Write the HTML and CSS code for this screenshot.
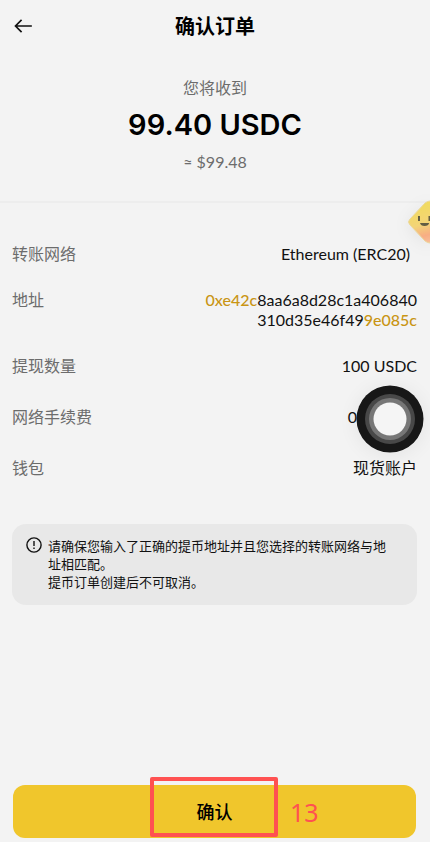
FILE: index.html
```html
<!DOCTYPE html>
<html lang="zh-CN">
<head>
<meta charset="utf-8">
<meta name="viewport" content="width=device-width, initial-scale=1">
<title>确认订单</title>
<link rel="stylesheet" href="styles.css">
</head>
<body>
<div class="page">
  <header class="topbar">
    <button class="back" type="button" aria-label="返回">
      <svg width="18" height="14" viewBox="0 0 18 14" fill="none" stroke="#111" stroke-width="1.7" stroke-linecap="square" stroke-linejoin="miter"><path d="M2 7H17M7 1.500L1.500 7L7 12.500"/></svg>
    </button>
    <h1 class="title">确认订单</h1>
  </header>

  <main class="content">
    <section class="summary">
      <p class="muted">您将收到</p>
      <p class="amount">99.40 USDC</p>
      <p class="muted">≈ $99.48</p>
    </section>

    <dl class="details">
      <div class="row"><dt>转账网络</dt><dd class="network">Ethereum (ERC20)</dd></div>
      <div class="row"><dt>地址</dt><dd class="address"><span class="mark">0xe42c</span>8aa6a8d28c1a406840<br>310d35e46f49<span class="mark">9e085c</span></dd></div>
      <div class="row"><dt>提现数量</dt><dd>100 USDC</dd></div>
      <div class="row"><dt>网络手续费</dt><dd class="fee">0</dd></div>
      <div class="row"><dt>钱包</dt><dd>现货账户</dd></div>
    </dl>

    <section class="notice">
      <svg class="notice-icon" width="16" height="16" viewBox="0 0 16 16" fill="none" stroke="#111" stroke-width="1.4"><circle cx="8" cy="8" r="7.1"/><path d="M8 4v5M8 10.4v1.6"/></svg>
      <p>请确保您输入了正确的提币地址并且您选择的转账网络与地址相匹配。<br>提币订单创建后不可取消。</p>
    </section>
  </main>

  <footer class="footer">
    <button class="confirm" type="button">确认</button>
    <div class="highlight"></div>
    <span class="step">13</span>
  </footer>

  <svg class="mascot" width="30" height="52" viewBox="0 0 30 52">
    <defs>
      <linearGradient id="face" gradientUnits="userSpaceOnUse" x1="22" y1="2" x2="34" y2="46"><stop offset="0" stop-color="#f1dc5c"/><stop offset="0.5" stop-color="#f3d477"/><stop offset="0.75" stop-color="#f8ad84"/><stop offset="1" stop-color="#f8c5a2"/></linearGradient>
    </defs>
    <path d="M10 20Q7 23 10 26L25 42Q30 46 35 42L52 26Q54 23 52 20L35 4Q30 0 25 4Z" fill="url(#face)" stroke="#e9d79c" stroke-width="1"/>
    <path d="M19 17v5M29.500 17v5" stroke="#625d43" stroke-width="2"/>
    <path d="M20 24h9.200q-.7 3-4.600 3t-4.600-3z" fill="#625d43"/>
  </svg>

  <button class="assist" type="button" aria-label="辅助触控">
    <svg width="68" height="68" viewBox="0 0 68 68"><circle cx="34" cy="34" r="33.500" fill="#171717"/><circle cx="34" cy="34" r="25" fill="#484848"/><circle cx="34" cy="34" r="21" fill="#777"/><circle cx="34" cy="34" r="16.500" fill="#f5f5f5"/></svg>
  </button>
</div>
</body>
</html>
```
FILE: styles.css
```css
* { box-sizing: border-box; }

body {
  margin: 0;
  background: #f3f3f3;
  color: #111;
  font: 16px/20px Lato, "Noto Sans CJK SC", sans-serif;
}

h1, p, dl, dd { margin: 0; }

button {
  border: 0;
  padding: 0;
  background: none;
  color: inherit;
  font: inherit;
}

.page {
  position: relative;
  display: flex;
  flex-direction: column;
  min-height: 100vh;
  overflow: hidden;
}

.topbar {
  display: grid;
  grid-template-columns: 32px 1fr 32px;
  align-items: center;
  height: 52px;
  padding: 0 14px;
}

.back { display: flex; }

.title {
  font-size: 20px;
  line-height: 28px;
  font-weight: 600;
  text-align: center;
  color: #000;
}

.content { flex: 1; }

.summary {
  display: flex;
  flex-direction: column;
  align-items: center;
  gap: 7px;
  padding: 26px 12px 29px;
  border-bottom: 2px solid #ededed;
}

.muted, dt { color: #6c6c6c; }

.amount {
  color: #000;
  font: 600 29px/40px Inter, sans-serif;
}

.details {
  display: flex;
  flex-direction: column;
  gap: 31px;
  padding: 41px 13px 46px 12px;
}

.row {
  display: flex;
  justify-content: space-between;
}

.row:nth-child(-n+2) { margin-bottom: -5px; }

dd { text-align: right; }
.network { padding-right: 7px; }
.fee { padding-right: 60px; }
.mark { color: #c99513; font-weight: 500; }

.notice {
  display: flex;
  gap: 6px;
  margin: 0 13px 0 12px;
  padding: 13px 20px 14px 14px;
  border-radius: 14px;
  background: #e8e8e8;
  font-size: 13px;
  line-height: 18px;
}

.notice-icon { flex: none; }

.footer {
  position: relative;
  padding: 0 14px 4px 13px;
}

.confirm {
  display: block;
  width: 100%;
  height: 53px;
  border-radius: 12px;
  background: #f0c62c;
  color: #000;
  font-size: 18px;
  font-weight: 500;
}

.highlight {
  position: absolute;
  top: -8px;
  left: calc(50% - 65px);
  width: 128px;
  height: 60px;
  border: 4px solid #ff5151;
  border-radius: 2px;
}

.step {
  position: absolute;
  top: 10px;
  left: calc(50% + 75px);
  color: #ff5151;
  font: 25px/34px "Noto Sans", sans-serif;
}

.mascot {
  position: absolute;
  top: 199px;
  right: 0;
  filter: drop-shadow(0 3px 8px #0001);
}

.assist {
  position: absolute;
  top: 385px;
  right: 6px;
  display: flex;
  border-radius: 50%;
  box-shadow: 0 2px 20px #0001;
}
```
